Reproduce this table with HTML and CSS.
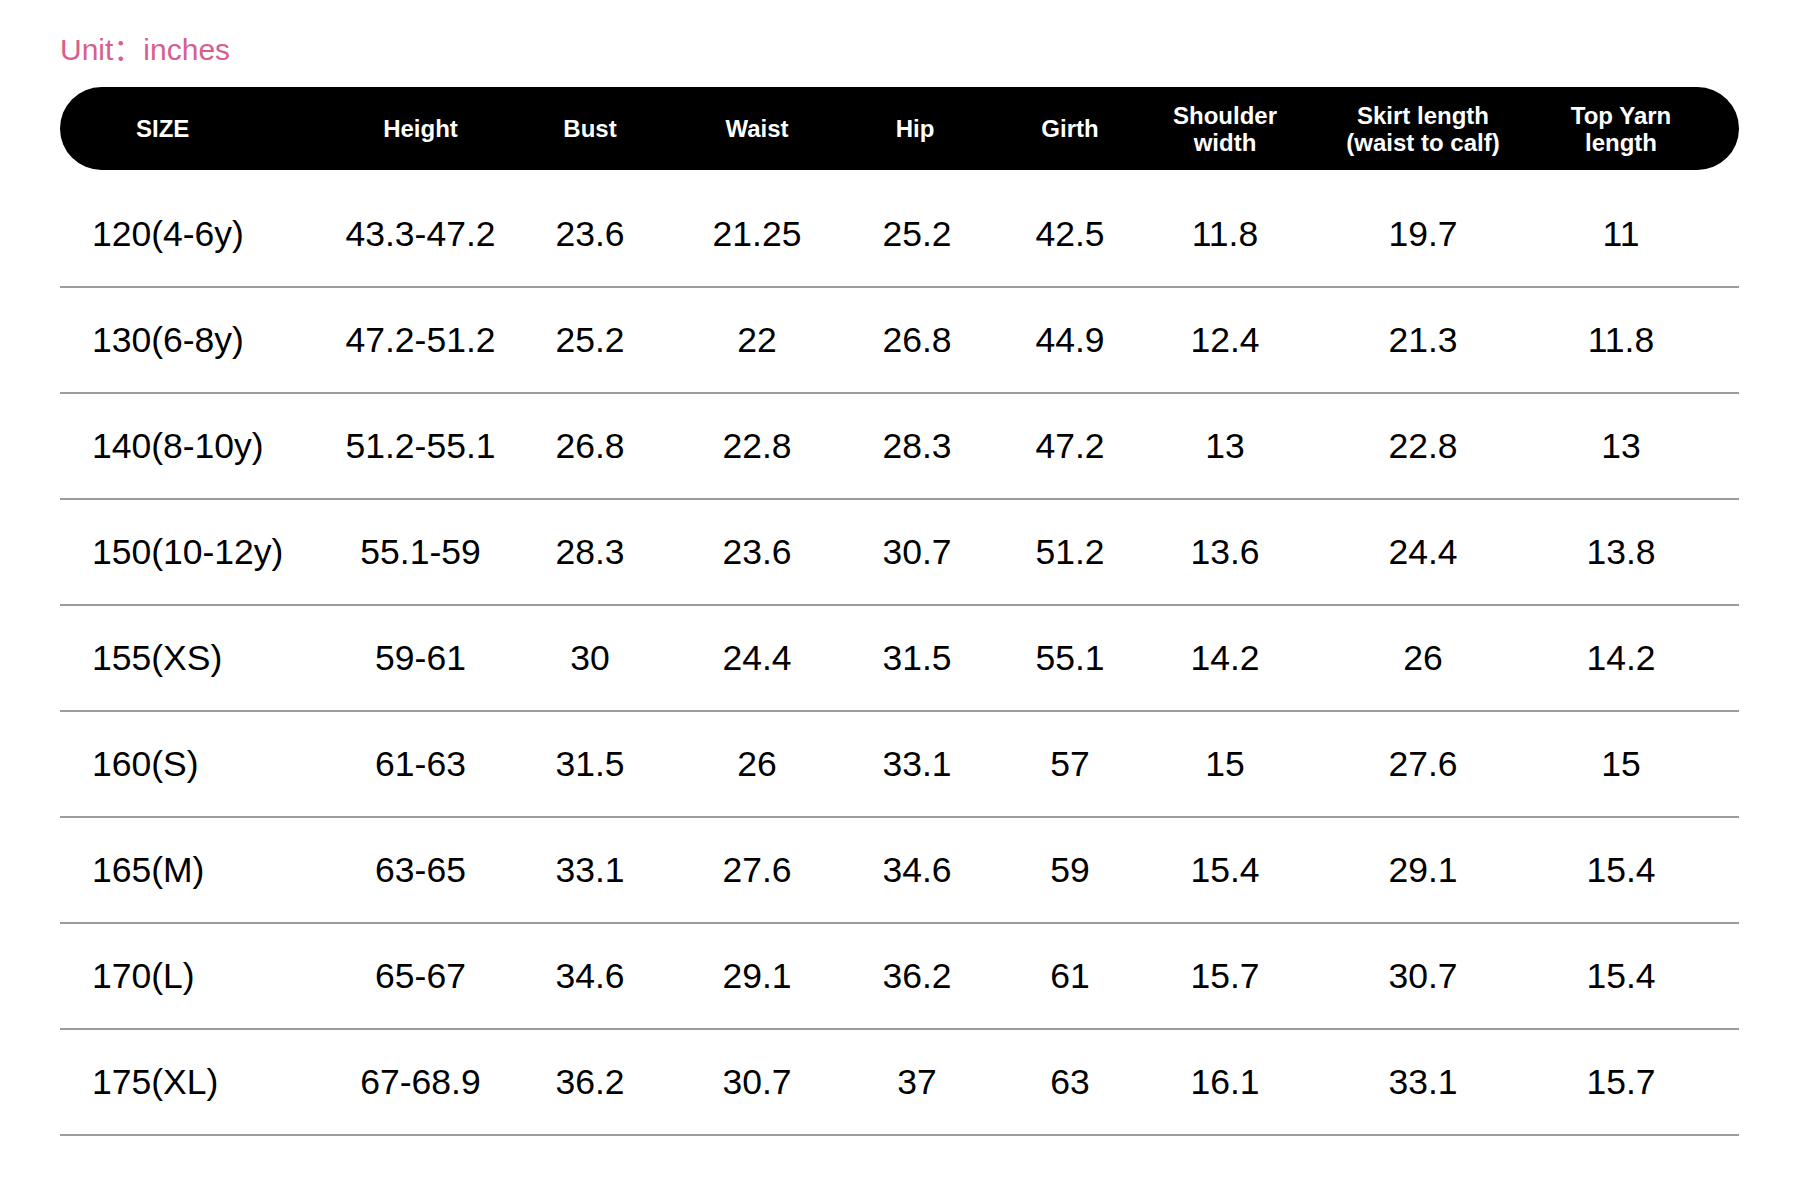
FILE: index.html
```html
<!DOCTYPE html>
<html lang="en">
<head>
<meta charset="utf-8">
<title>Size chart</title>
<link rel="stylesheet" href="styles.css">
</head>
<body>
<div class="page">
  <div class="unit">Unit：inches</div>
  <div class="chart">
    <div class="grid head">
      <div class="cell first-h">SIZE</div>
      <div class="cell c2">Height</div>
      <div class="cell">Bust</div>
      <div class="cell c4">Waist</div>
      <div class="cell">Hip</div>
      <div class="cell">Girth</div>
      <div class="cell c7">Shoulder<br>width</div>
      <div class="cell">Skirt length<br>(waist to calf)</div>
      <div class="cell">Top Yarn<br>length</div>
    </div>
    <div class="grid row"><div class="cell first">120(4-6y)</div><div class="cell c2">43.3-47.2</div><div class="cell">23.6</div><div class="cell c4">21.25</div><div class="cell c5">25.2</div><div class="cell">42.5</div><div class="cell c7">11.8</div><div class="cell">19.7</div><div class="cell">11</div></div>
    <div class="grid row"><div class="cell first">130(6-8y)</div><div class="cell c2">47.2-51.2</div><div class="cell">25.2</div><div class="cell c4">22</div><div class="cell c5">26.8</div><div class="cell">44.9</div><div class="cell c7">12.4</div><div class="cell">21.3</div><div class="cell">11.8</div></div>
    <div class="grid row"><div class="cell first">140(8-10y)</div><div class="cell c2">51.2-55.1</div><div class="cell">26.8</div><div class="cell c4">22.8</div><div class="cell c5">28.3</div><div class="cell">47.2</div><div class="cell c7">13</div><div class="cell">22.8</div><div class="cell">13</div></div>
    <div class="grid row"><div class="cell first">150(10-12y)</div><div class="cell c2">55.1-59</div><div class="cell">28.3</div><div class="cell c4">23.6</div><div class="cell c5">30.7</div><div class="cell">51.2</div><div class="cell c7">13.6</div><div class="cell">24.4</div><div class="cell">13.8</div></div>
    <div class="grid row"><div class="cell first">155(XS)</div><div class="cell c2">59-61</div><div class="cell">30</div><div class="cell c4">24.4</div><div class="cell c5">31.5</div><div class="cell">55.1</div><div class="cell c7">14.2</div><div class="cell">26</div><div class="cell">14.2</div></div>
    <div class="grid row"><div class="cell first">160(S)</div><div class="cell c2">61-63</div><div class="cell">31.5</div><div class="cell c4">26</div><div class="cell c5">33.1</div><div class="cell">57</div><div class="cell c7">15</div><div class="cell">27.6</div><div class="cell">15</div></div>
    <div class="grid row"><div class="cell first">165(M)</div><div class="cell c2">63-65</div><div class="cell">33.1</div><div class="cell c4">27.6</div><div class="cell c5">34.6</div><div class="cell">59</div><div class="cell c7">15.4</div><div class="cell">29.1</div><div class="cell">15.4</div></div>
    <div class="grid row"><div class="cell first">170(L)</div><div class="cell c2">65-67</div><div class="cell">34.6</div><div class="cell c4">29.1</div><div class="cell c5">36.2</div><div class="cell">61</div><div class="cell c7">15.7</div><div class="cell">30.7</div><div class="cell">15.4</div></div>
    <div class="grid row"><div class="cell first">175(XL)</div><div class="cell c2">67-68.9</div><div class="cell">36.2</div><div class="cell c4">30.7</div><div class="cell c5">37</div><div class="cell">63</div><div class="cell c7">16.1</div><div class="cell">33.1</div><div class="cell">15.7</div></div>
  </div>
</div>
</body>
</html>
```
FILE: styles.css
```css
html, body {
  margin: 0;
  background: #fff;
}
body {
  font-family: "Liberation Sans", Arial, "Noto Sans CJK SC", sans-serif;
  color: #000;
}
.page {
  padding: 33px 61px 0 60px;
}
.unit {
  font-size: 30px;
  line-height: 34px;
  color: #d75f8d;
  margin-bottom: 20px;
}
.grid {
  display: grid;
  grid-template-columns: 232px 214px 168px 163px 156px 154px 177px 198px 198px;
  padding-right: 19px;
  align-items: center;
}
.head {
  height: 83px;
  background: #000;
  color: #fff;
  border-radius: 42px;
  font-weight: bold;
  font-size: 24px;
  line-height: 27px;
  margin-bottom: 12px;
}
.row {
  height: 104px;
  border-bottom: 2px solid #9c9c9c;
  font-family: "Liberation Sans Narrow", "Arial Narrow", "Liberation Sans", sans-serif;
  font-size: 35.5px;
  line-height: 42px;
}
.cell {
  text-align: center;
  white-space: nowrap;
}
.first-h {
  text-align: left;
  padding-left: 76px;
}
.first {
  text-align: left;
  padding-left: 32px;
}
.c2 {
  padding-left: 43px;
}
.c4 {
  padding-left: 3px;
}
.c5 {
  padding-left: 4px;
}
.c7 {
  padding-right: 21px;
}
```
